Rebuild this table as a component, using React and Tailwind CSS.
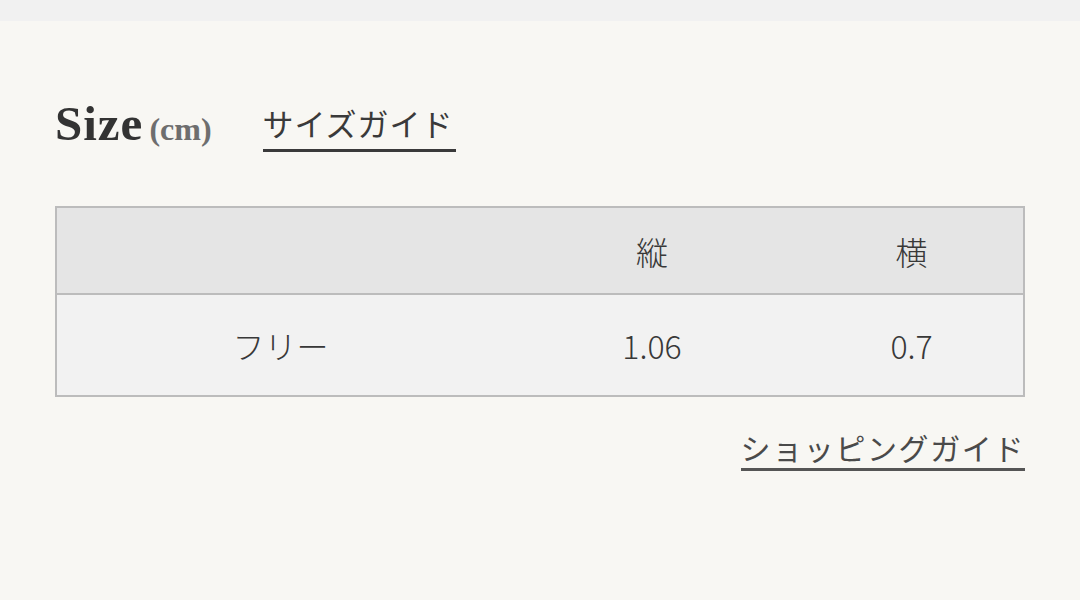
import React from 'react';

const jp = { fontFamily: '"Noto Sans CJK JP", "Noto Sans", sans-serif' };

const rows = [{ label: 'フリー', h: '1.06', w: '0.7' }];

const App = () => {
  return (
    <div className="w-[1080px] h-[600px] bg-[#f8f7f3] overflow-hidden" style={jp}>
      {/* top band */}
      <div className="h-[21px] bg-[#f1f1f1]"></div>

      <div className="px-[55px]">
        {/* heading */}
        <div className="flex items-end mt-[80px] h-[50px]">
          <h2
            className="text-[49px] leading-none font-bold text-[#333] tracking-[1px] mb-[3px] flex items-baseline"
            style={{ fontFamily: '"Liberation Serif", serif' }}
          >
            Size
            <span className="ml-[6px] text-[32px] tracking-[0px] text-[#6e6e6e]">(cm)</span>
          </h2>
          <a className="ml-[51px] text-[31px] leading-none text-[#3a3a3a] tracking-[1px] border-b-[3px] border-[#3a3a3a] pb-[11px] pr-[2px] mb-[-1px]">
            サイズガイド
          </a>
        </div>

        {/* table */}
        <table className="mt-[55px] w-[970px] border-[2px] border-[#bcbcbc] border-collapse text-[#383838] text-[32px] font-light">
          <thead>
            <tr className="bg-[#e5e5e5] h-[87px]">
              <th className="w-[448px] font-light border-b-[2px] border-[#bcbcbc]"></th>
              <th className="w-[296px] font-light border-b-[2px] border-[#bcbcbc]">縦</th>
              <th className="font-light border-b-[2px] border-[#bcbcbc]">横</th>
            </tr>
          </thead>
          <tbody>
            {rows.map((r) => (
              <tr key={r.label} className="bg-[#f2f2f2] h-[102px]">
                <td className="text-center">{r.label}</td>
                <td className="text-center">{r.h}</td>
                <td className="text-center">{r.w}</td>
              </tr>
            ))}
          </tbody>
        </table>

        {/* shopping guide link */}
        <div className="flex justify-end mt-[35px]">
          <a className="text-[30px] leading-none text-[#4a4a4a] tracking-[1.6px] border-b-[3px] border-[#555] pb-[6px]">
            ショッピングガイド
          </a>
        </div>
      </div>
    </div>
  );
};

export default App;
